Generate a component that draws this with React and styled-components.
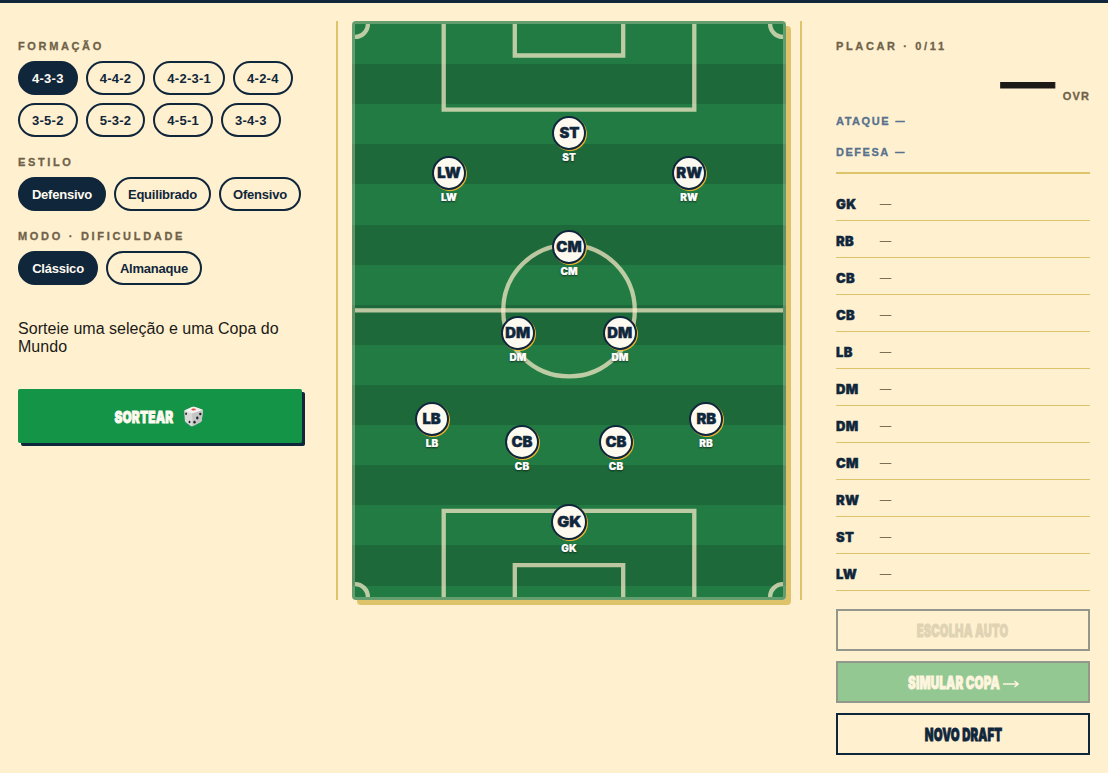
import React from "react";
import styled, { createGlobalStyle } from "styled-components";

const navy = "#10263b";
const gold = "#dfc36a";
const cream = "#fff1d0";

const GlobalStyle = createGlobalStyle`
  * { box-sizing: border-box; }
  body { margin: 0; background: ${cream}; color: #1c1a17; font-family: "Liberation Sans", Helvetica, sans-serif; }
  button { font: inherit; color: inherit; margin: 0; }
`;

const Page = styled.main`
  display: grid;
  grid-template-columns: 318px 466px 288px;
  align-items: start;
  height: 773px;
  padding: 18px;
  border-top: 3px solid ${navy};
  overflow: hidden;
`;

const Panel = styled.section`
  display: flex;
  flex-direction: column;
  padding: ${(p) => (p.$right ? "18px 0 0 34px" : "18px 34px 0 0")};
`;

const Label = styled.h2`
  margin: 0;
  height: 14px;
  line-height: 14px;
  font-size: 11px;
  font-weight: 700;
  letter-spacing: ${(p) => p.$spacing || 2.64}px;
  color: #706249;
  white-space: nowrap;
  -webkit-text-stroke: 0.3px currentColor;
`;

const Pills = styled.div`
  display: flex;
  flex-wrap: wrap;
  gap: 8px;
  margin: 8px -8px 18px 0;
`;

const Pill = styled.button`
  height: 34px;
  width: ${(p) => (p.$width ? p.$width + "px" : "auto")};
  padding: ${(p) => (p.$width ? 0 : "0 12px")};
  border: 2px solid ${navy};
  border-radius: 17px;
  background: ${(p) => (p.$on ? navy : "transparent")};
  color: ${(p) => (p.$on ? "#fffaf0" : navy)};
  font-size: 13px;
  font-weight: 700;
  letter-spacing: ${(p) => (p.$width ? -0.22 : 0.26)}px;
  white-space: nowrap;
`;

const Hint = styled.p`
  margin: 17px 0 33px;
  font-size: 16px;
  line-height: 18px;
  letter-spacing: 0.03px;
`;

const Draw = styled.button`
  display: flex;
  align-items: center;
  justify-content: center;
  gap: 9px;
  height: 54px;
  padding: 1px 2px 0 0;
  border: 0;
  border-radius: 2px;
  background: #149447;
  color: #fffaf0;
  box-shadow: 3px 3px 0 ${navy};
`;

const Poster = styled.span`
  display: flex;
  justify-content: center;
  align-items: center;
  width: ${(p) => p.$width}px;
  font-family: Inter, "Liberation Sans", sans-serif;
  font-weight: 900;
  font-size: ${(p) => p.$size || 17.5}px;
  letter-spacing: 0.2px;
  white-space: nowrap;
  -webkit-text-stroke: 0.85px currentColor;

  & > span { transform: scaleX(${(p) => p.$scale || 0.64}); }
`;

const Arrow = styled.svg`
  width: 16px;
  height: 8px;
  margin: 2px 0 0 3px;
`;

const Centre = styled.section`
  padding: 0 14px;
  border: solid ${gold};
  border-width: 0 2px;
`;

const Pitch = styled.div`
  position: relative;
  height: 579px;
  border: 3px solid rgba(255, 240, 207, 0.3);
  border-radius: 4px;
  background: repeating-linear-gradient(180deg, #237b44 0 7%, #1e693a 7% 14%);
  box-shadow: 5px 5px 0 ${gold};
`;

const Lines = styled.svg`
  display: block;
  width: 428px;
  height: 573px;
`;

const Player = styled.div`
  position: absolute;
  left: ${(p) => p.$x - 355}px;
  top: ${(p) => p.$y - 24}px;
  width: 0;
  height: 0;
  display: flex;
  flex-direction: column;
  align-items: center;
`;

const Disc = styled.div`
  flex: none;
  display: flex;
  align-items: center;
  justify-content: center;
  width: ${(p) => p.$size}px;
  height: ${(p) => p.$size}px;
  margin-top: ${(p) => -p.$size / 2}px;
  border: 2px solid ${navy};
  border-radius: 50%;
  background: #fffaf0;
  box-shadow: 1px 1px 0 #efb52b;
  color: ${navy};
  font: 900 ${(p) => (p.$size > 34 ? 15 : 14)}px/16px Inter, "Liberation Sans", sans-serif;
  -webkit-text-stroke: 0.4px currentColor;

  & > span { transform: scaleX(1.06); }
`;

const Tag = styled.div`
  margin-top: ${(p) => (p.$low ? 2 : 1)}px;
  line-height: 13px;
  color: #fff;
  font-family: Inter, "Liberation Sans", sans-serif;
  font-size: 10px;
  font-weight: 900;
  letter-spacing: 0.1px;
  -webkit-text-stroke: 0.2px currentColor;
  text-shadow: 0 1px 2px rgba(0, 0, 0, 0.6);
`;

const Overall = styled.div`
  display: flex;
  justify-content: flex-end;
  align-items: flex-end;
  gap: 8px;
  height: 50px;
`;

const Score = styled.span`
  height: 51px;
  line-height: 59px;
  font-size: 54px;
  font-weight: 700;
  -webkit-text-stroke: 1.2px currentColor;
`;

const Metric = styled.div`
  display: flex;
  gap: 5.5px;
  height: 14px;
  margin-top: ${(p) => p.$gap}px;
  line-height: 14px;
  font-size: 11px;
  font-weight: 700;
  letter-spacing: 1.54px;
  color: #58728d;
  -webkit-text-stroke: 0.3px currentColor;
`;

const MetricValue = styled.span`
  font-size: 9px;
  -webkit-text-stroke: 0.6px currentColor;
`;

const Roster = styled.ul`
  list-style: none;
  margin: 13px 0 0;
  padding: 10px 0 0;
  border-top: 2px solid ${gold};
`;

const Slot = styled.li`
  display: flex;
  align-items: center;
  height: 37px;
  padding-top: 4px;
  border-bottom: 1px solid ${gold};
  color: #706249;
`;

const Role = styled.b`
  width: 44px;
  color: ${navy};
  font-family: Inter, "Liberation Sans", sans-serif;
  font-size: 13px;
  font-weight: 900;
  letter-spacing: 0.4px;
  -webkit-text-stroke: 0.4px currentColor;
`;

const Pick = styled.span`
  margin-top: -3px;
  font-size: 11px;
  -webkit-text-stroke: 0.25px currentColor;
`;

const Actions = styled.div`
  display: flex;
  flex-direction: column;
  gap: 10px;
  margin-top: 18px;
`;

const Action = styled.button`
  display: flex;
  align-items: center;
  justify-content: center;
  height: 42px;
  padding: 1px 0 0;
  border: 2px solid ${(p) => (p.disabled ? "#93978c" : navy)};
  background: ${(p) => (p.$green ? "#93c893" : "transparent")};
  color: ${(p) => (p.$green ? "#fff5df" : p.disabled ? "#dfd3b3" : navy)};
`;

const formations = ["4-3-3", "4-4-2", "4-2-3-1", "4-2-4", "3-5-2", "5-3-2", "4-5-1", "3-4-3"];
const players = [
  ["ST", 569, 133], ["LW", 449, 173], ["RW", 689, 173], ["CM", 569, 247],
  ["DM", 518, 333], ["DM", 620, 333], ["LB", 432, 419], ["RB", 706, 419],
  ["CB", 522, 442], ["CB", 616, 442], ["GK", 569, 522],
];
const roster = ["GK", "RB", "CB", "CB", "LB", "DM", "DM", "CM", "RW", "ST", "LW"];

function Choices({ items, widths = [] }) {
  return (
    <Pills>
      {items.map((name, i) => <Pill key={name} $on={i === 0} $width={widths[i]}>{name}</Pill>)}
    </Pills>
  );
}

function Die() {
  return (
    <svg width="21" height="21" viewBox="0 0 21 21">
      <path d="M1.2 5.5Q1 4.5 2.2 4L9 1Q10.5.5 12 .9L18.8 3.2Q20.2 3.8 20 5L18.7 14.5Q18.5 15.5 17.5 16.2L10 20.1Q8.8 20.5 7.7 19.9L3 16.6Q2 15.8 1.9 14.8Z" fill="#d9d9d9" />
      <path d="M1.3 4.8L9 1Q10.5.5 12 .9L19.8 4.1L9.2 7.6Z" fill="#f1f1f0" />
      <path d="M9.2 7.6L20 4.1L18.6 15.3L9.5 20.3Z" fill="#c5c5c5" />
      <ellipse cx="10.6" cy="3.5" rx="2.2" ry="1" fill="#e44b43" />
      <g fill="#222">
        <ellipse cx="3.1" cy="7.8" rx=".9" ry="1.2" />
        <ellipse cx="6.5" cy="16" rx=".9" ry="1.3" />
        <ellipse cx="17.3" cy="8" rx="1.2" ry="1.3" />
        <ellipse cx="14.3" cy="12" rx="1.2" ry="1.4" />
        <ellipse cx="11.5" cy="16.2" rx="1.2" ry="1.4" />
      </g>
    </svg>
  );
}

export default function App() {
  return (
    <>
      <GlobalStyle />
      <Page>
        <Panel>
          <Label>FORMAÇÃO</Label>
          <Choices items={formations} />
          <Label>ESTILO</Label>
          <Choices items={["Defensivo", "Equilibrado", "Ofensivo"]} widths={[88, 97, 82]} />
          <Label $spacing={2.7}>MODO · DIFICULDADE</Label>
          <Choices items={["Clássico", "Almanaque"]} widths={[80, 96]} />
          <Hint>Sorteie uma seleção e uma Copa do Mundo</Hint>
          <Draw>
            <Poster $width={60} $size={16.5} $scale={0.72}><span>SORTEAR</span></Poster>
            <Die />
          </Draw>
        </Panel>

        <Centre>
          <Pitch>
            <Lines viewBox="0 0 428 573" fill="none" stroke="#fff0cf" strokeOpacity="0.7" strokeWidth="4.3">
              <path d="M0 286.3H428" />
              <circle cx="214" cy="286.6" r="65.8" />
              <path d="M88.7 0V85.7H339.3V0" />
              <path d="M159.8 0V31.5H268.2V0" />
              <path d="M88.7 573V486.8H339.3V573" />
              <path d="M159.8 573V541.2H268.2V573" />
              <circle cx="0" cy="0" r="12.9" />
              <circle cx="428" cy="0" r="12.9" />
              <circle cx="0" cy="573" r="12.9" />
              <circle cx="428" cy="573" r="12.9" />
            </Lines>
            {players.map(([role, x, y], i) => (
              <Player key={i} $x={x} $y={y}>
                <Disc $size={role === "GK" ? 36 : 34}><span>{role}</span></Disc>
                <Tag $low={role === "GK"}>{role}</Tag>
              </Player>
            ))}
          </Pitch>
        </Centre>

        <Panel $right>
          <Label>PLACAR · 0/11</Label>
          <Overall>
            <Score>—</Score>
            <Label $spacing={1.1}>OVR</Label>
          </Overall>
          <Metric $gap={11}>ATAQUE <MetricValue>—</MetricValue></Metric>
          <Metric $gap={17}>DEFESA <MetricValue>—</MetricValue></Metric>
          <Roster>
            {roster.map((role, i) => <Slot key={i}><Role>{role}</Role><Pick>—</Pick></Slot>)}
          </Roster>
          <Actions>
            <Action disabled><Poster $width={92}><span>ESCOLHA AUTO</span></Poster></Action>
            <Action disabled $green>
              <Poster $width={93} $scale={0.665}><span>SIMULAR COPA</span></Poster>
              <Arrow viewBox="0 0 16 8" fill="none" stroke="currentColor" strokeWidth="1.5">
                <path d="M0 4H15M11.5 1L15 4L11.5 7" />
              </Arrow>
            </Action>
            <Action><Poster $width={77} $scale={0.65}><span>NOVO DRAFT</span></Poster></Action>
          </Actions>
        </Panel>
      </Page>
    </>
  );
}
